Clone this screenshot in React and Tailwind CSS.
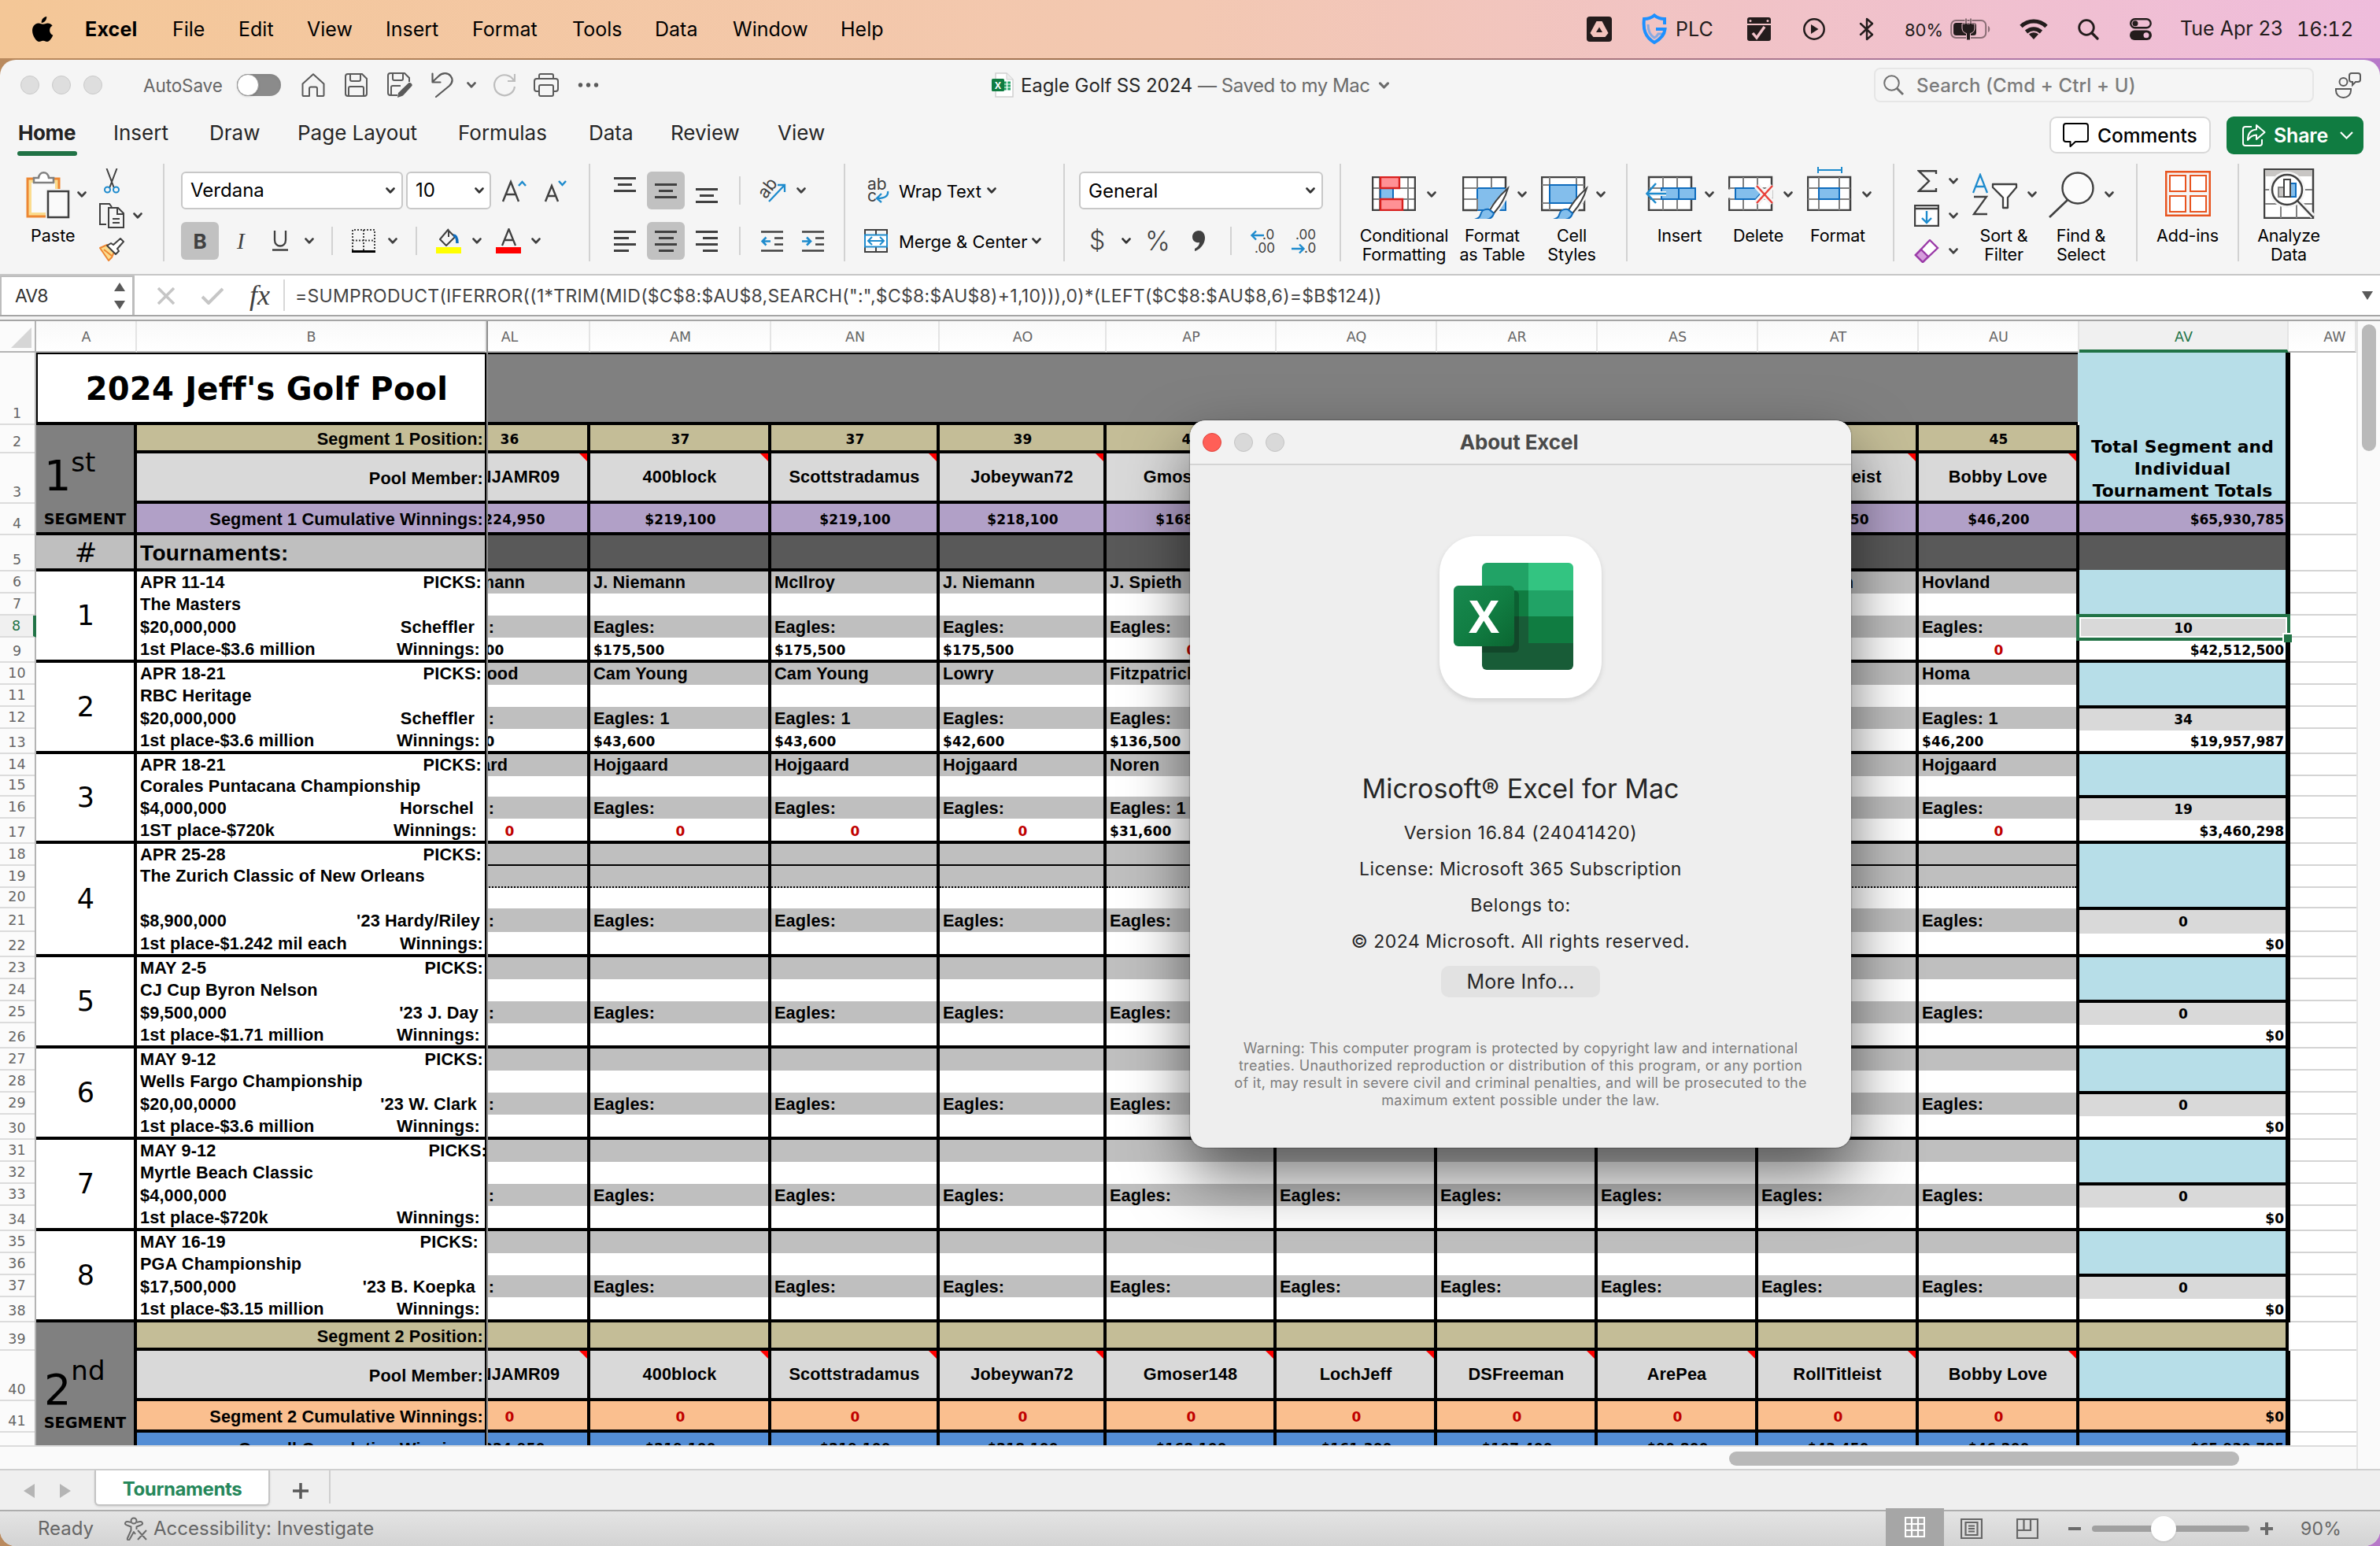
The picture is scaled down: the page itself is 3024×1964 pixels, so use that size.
import clsx from "clsx";

const ui = "font-[Inter,'Liberation_Sans',sans-serif]";
const arial = "font-['Liberation_Sans',sans-serif] font-bold text-[21.700px] tracking-[0.150px]";
const verdana = "font-['DejaVu_Sans',sans-serif] font-bold text-[17px]";

/* ---------- small pieces ---------- */

function Chevron({ className = "text-[#333]" }) {
  return (
    <svg className={clsx("h-2 w-3 shrink-0", className)} viewBox="0 0 12 8" fill="none" stroke="currentColor" strokeWidth="2.8" strokeLinecap="round" strokeLinejoin="round">
      <path d="M1.6 1.6 6 6.2l4.4-4.6" />
    </svg>
  );
}

function Icon({ className, box, children }) {
  return (
    <svg className={clsx("shrink-0", className)} viewBox={box} fill="none" stroke="currentColor" strokeWidth="2">
      {children}
    </svg>
  );
}

function Sep({ className = "" }) {
  return <div className={clsx("h-9 w-0.5 shrink-0 bg-[#d2d2d2]", className)} />;
}

/* ---------- mac menu bar ---------- */

const menus = [
  { name: "File", w: "w-[84px]" },
  { name: "Edit", w: "w-[87px]" },
  { name: "View", w: "w-[100px]" },
  { name: "Insert", w: "w-[110px]" },
  { name: "Format", w: "w-[127px]" },
  { name: "Tools", w: "w-[105px]" },
  { name: "Data", w: "w-[99px]" },
  { name: "Window", w: "w-[137px]" },
  { name: "Help", w: "w-[80px]" },
];

function MenuBar() {
  return (
    <div className="flex h-[74px] w-full items-center bg-linear-to-r from-[#f4c797] via-[#f3c8b2] to-[#efbcdc] text-[25px] text-black">
      <svg className="ml-[41px] h-8 w-[27px] shrink-0" viewBox="0 0 27 32" fill="#000">
        <path d="M18.2 0c.3 2.200-.5 4.200-1.700 5.600-1.200 1.400-3 2.400-4.800 2.300-.3-2.100.7-4.200 1.800-5.500C14.800 1 16.700.1 18.200 0z" />
        <path d="M26.300 23.700c-.7 1.700-1.100 2.400-2 3.900-1.300 2-3.100 4.400-5.300 4.400-2 0-2.500-1.300-5.200-1.300-2.700 0-3.300 1.300-5.300 1.300-2.200 0-3.900-2.200-5.200-4.200C-.4 22.400-.8 15.900 1.500 12.300c1.500-2.400 4-3.900 6.400-3.900 2.400 0 3.900 1.300 5.900 1.300 1.900 0 3.100-1.300 5.900-1.300 2.100 0 4.300 1.100 5.900 3.100-5.100 2.900-4.300 10.200.7 12.200z" />
      </svg>
      <div className="ml-10 w-[111px] pt-0.5 font-bold tracking-[0.2px]">Excel</div>
      {menus.map((m) => (
        <div key={m.name} className={clsx("shrink-0 pt-0.5", m.w)}>{m.name}</div>
      ))}
      <svg className="ml-[868px] h-8 w-8 shrink-0" viewBox="0 0 32 32">
        <rect width="32" height="32" rx="4" fill="#231c1c" />
        <path d="M12.500 6h7l8 15-4 5h-15l-4-5z" fill="#f2c4bd" />
        <path d="M16 13.500l4 6.500h-8z" fill="#231c1c" />
      </svg>
      <Icon className="ml-[37px] h-10 w-[34px] text-[#1e90ff]" box="0 0 34 40">
        <path strokeWidth="4" d="M30 14V7c-5 0-9-1-13-4.500C13 6 9 7 4 7c-1.500 13 1 23 13 30 9-5 13-11 13.500-17H19" />
        <path strokeWidth="3" d="M30 26h-8c-1 2-3 4-5 5-5-3-8-8-8-17" strokeOpacity=".5" />
      </Icon>
      <div className="ml-2.5 w-[91px] pt-0.5 text-[#231c1c]">PLC</div>
      <svg className="h-[30px] w-[30px] shrink-0" viewBox="0 0 30 30">
        <path d="M0 8V3a3 3 0 0 1 3-3h24a3 3 0 0 1 3 3v5zM0 10h30v17a3 3 0 0 1-3 3H3a3 3 0 0 1-3-3z" fill="#231c1c" />
        <circle cx="4" cy="4.500" r="1.500" fill="#f0c2c9" />
        <circle cx="26" cy="4.500" r="1.500" fill="#f0c2c9" />
        <path d="M7 20l5 6L22 12" fill="none" stroke="#f0c2c9" strokeWidth="3.500" />
      </svg>
      <Icon className="ml-10 h-[30px] w-[30px] text-[#231c1c]" box="0 0 30 30">
        <circle cx="15" cy="15" r="12.700" strokeWidth="2.500" />
        <path d="M11 9l9.500 6-9.500 6z" fill="currentColor" stroke="none" />
      </Icon>
      <Icon className="ml-[42px] h-[30px] w-[20px] text-[#231c1c]" box="0 0 20 30">
        <path strokeWidth="2.400" d="M2 8l15 14-7 6V2l7 6L2 22" strokeLinejoin="round" strokeLinecap="round" />
      </Icon>
      <div className="ml-[38px] w-[58px] pt-0.5 text-[22px] text-[#231c1c]">80%</div>
      <svg className="h-[28px] w-[52px] shrink-0" viewBox="0 0 52 28">
        <rect x="1.200" y="3" width="44" height="22" rx="6" fill="none" stroke="#231c1c" strokeOpacity=".5" strokeWidth="2" />
        <path d="M48 10c3 1 3 7 0 8z" fill="#231c1c" fillOpacity=".5" />
        <rect x="4" y="6" width="29" height="16" rx="3.500" fill="#231c1c" />
        <path d="M19 0v7h-4v6c0 4 3 6 5.500 6.500V28h5v-8.500C28 19 31 17 31 13V7h-4V0h-2v7h-4V0z" fill="#231c1c" stroke="#efc0cd" strokeWidth="1" />
      </svg>
      <Icon className="ml-[36px] h-[26px] w-[36px] text-[#231c1c]" box="0 0 36 26">
        <path strokeWidth="5" d="M2 9.500C11 .8 25 .8 34 9.500M8.500 16.500c6-5 13-5 19 0" />
        <path d="M12 19.500c4-3 8-3 12 0l-6 6.500z" fill="currentColor" stroke="none" />
      </Icon>
      <Icon className="ml-[38px] h-[27px] w-[27px] text-[#231c1c]" box="0 0 27 27">
        <circle cx="11" cy="11" r="9.300" strokeWidth="2.800" />
        <path strokeWidth="3.200" strokeLinecap="round" d="M18 18l7 7" />
      </Icon>
      <Icon className="ml-[39px] h-[28px] w-[28px] text-[#231c1c]" box="0 0 28 28">
        <rect x="1.200" y="1.200" width="25.500" height="11" rx="5.500" strokeWidth="2.400" />
        <circle cx="7" cy="6.700" r="3.500" fill="currentColor" stroke="none" />
        <rect y="15.500" width="28" height="12.500" rx="6.200" fill="currentColor" stroke="none" />
        <circle cx="21" cy="21.700" r="3.500" fill="#efbdd7" stroke="none" />
      </Icon>
      <div className="ml-9 w-[148px] whitespace-nowrap text-[#231c1c]">Tue Apr 23</div>
      <div className="text-[25.500px] tracking-[-0.2px] whitespace-nowrap text-[#231c1c] tabular-nums">16:12</div>
    </div>
  );
}

/* ---------- title bar ---------- */

function TitleBar() {
  return (
    <div className="flex h-16 items-center text-[#5a5a5a]">
      <div className="ml-[26px] flex w-[156px] gap-4">
        <div className="h-6 w-6 rounded-full border border-[#c9c9c9] bg-[#dedede]" />
        <div className="h-6 w-6 rounded-full border border-[#c9c9c9] bg-[#dedede]" />
        <div className="h-6 w-6 rounded-full border border-[#c9c9c9] bg-[#dedede]" />
      </div>
      <div className="w-[119px] pt-0.5 text-[22.500px] tracking-[-0.1px] text-[#666]">AutoSave</div>
      <div className="h-7 w-14 rounded-full bg-[#8b8b8b] shadow-inner">
        <div className="h-7 w-7 rounded-full border border-[#999] bg-white shadow" />
      </div>
      <Icon className="ml-[26px] h-[30px] w-[30px]" box="0 0 30 30">
        <path strokeLinejoin="round" d="M1.500 13.500 15 1.200l13.500 12.300V28a1 1 0 0 1-1 1H20v-9.500a2 2 0 0 0-2-2h-6a2 2 0 0 0-2 2V29H2.500a1 1 0 0 1-1-1z" />
      </Icon>
      <Icon className="ml-[25px] h-[30px] w-[29px]" box="0 0 29 30">
        <path d="M1 4a3 3 0 0 1 3-3h18l6 6v19a3 3 0 0 1-3 3H4a3 3 0 0 1-3-3zM7 1v7a2 2 0 0 0 2 2h9a2 2 0 0 0 2-2V1M5 29V19a2 2 0 0 1 2-2h15a2 2 0 0 1 2 2v10" />
      </Icon>
      <Icon className="ml-[25px] h-8 w-8" box="0 0 32 32">
        <path d="M13 29H4a3 3 0 0 1-3-3V4a3 3 0 0 1 3-3h18l6 6v5M7 1v7a2 2 0 0 0 2 2h9a2 2 0 0 0 2-2V1M5 29V19a2 2 0 0 1 2-2h10" />
        <path fill="currentColor" stroke="none" d="M27 13.500c2-1.500 5.500 1 4.500 3.500L20 29.500 13 32l1-6z" />
      </Icon>
      <Icon className="ml-[24px] h-8 w-7" box="0 0 28 32">
        <path strokeLinecap="round" strokeLinejoin="round" strokeWidth="2.200" d="M1.500 1.500v11h10M1.500 12 9 5c5-5 12-5 15.500-.5 3.500 4.500 2 9-1.500 12.500L6 31" />
      </Icon>
      <Chevron className="ml-[17px]" />
      <Icon className="ml-[22px] h-[30px] w-[28px] text-[#bdbdbd]" box="0 0 28 30">
        <path strokeWidth="2.200" d="M27 1v9h-9M26 10A13 13 0 1 0 27 17" />
      </Icon>
      <Icon className="ml-[23px] h-[30px] w-8" box="0 0 32 30">
        <path d="M7 7V3a2 2 0 0 1 2-2h14a2 2 0 0 1 2 2v4M7 23H4a3 3 0 0 1-3-3V10a3 3 0 0 1 3-3h24a3 3 0 0 1 3 3v10a3 3 0 0 1-3 3h-3M7 17a2 2 0 0 1 2-2h14a2 2 0 0 1 2 2v10a2 2 0 0 1-2 2H9a2 2 0 0 1-2-2z" />
      </Icon>
      <svg className="ml-6 h-2 w-7 shrink-0" viewBox="0 0 28 8" fill="#5a5a5a">
        <circle cx="3.500" cy="4" r="2.700" />
        <circle cx="13.500" cy="4" r="2.700" />
        <circle cx="23.500" cy="4" r="2.700" />
      </svg>
      <svg className="ml-[498px] h-8 w-7 shrink-0" viewBox="0 0 28 32">
        <path d="M5 1h14l8 8v22H5z" fill="#fff" stroke="#cfcfcf" strokeWidth="1.500" />
        <path d="M19 1v8h8" fill="#eee" stroke="#cfcfcf" />
        <path d="M15 13h9M15 17h9M15 21h9" stroke="#21a366" strokeWidth="3" />
        <path d="M19.500 10v14" stroke="#fff" strokeWidth="1.500" />
        <rect y="8" width="16" height="16" rx="1.500" fill="#107c41" />
        <text x="8" y="20.500" textAnchor="middle" fontSize="12" fontWeight="700" fontFamily="Open Sans" fill="#fff">X</text>
      </svg>
      <div className="ml-[9px] w-[225px] pt-0.5 text-[24px] tracking-[-0.1px] whitespace-nowrap text-[#262626]">Eagle Golf SS 2024</div>
      <div className="w-[229px] pt-0.5 text-[24px] tracking-[-0.45px] whitespace-nowrap text-[#6b6b6b]">— Saved to my Mac</div>
      <Chevron className="h-[9px] w-[15px] text-[#6b6b6b]" />
      <div className="ml-[615px] flex h-11 w-[559px] items-center rounded-lg border-2 border-[#e6e6e6]">
        <Icon className="ml-2.5 h-[26px] w-[26px] text-[#707070]" box="0 0 26 26">
          <circle cx="10.500" cy="10.500" r="9.300" />
          <path strokeWidth="2.800" d="M17 17l8 8" />
        </Icon>
        <div className="ml-4 pt-0.5 text-[24px] font-medium tracking-[0.15px] whitespace-nowrap text-[#7b7b7b]">Search (Cmd + Ctrl + U)</div>
      </div>
      <Icon className="ml-[27px] h-[33px] w-[34px]" box="0 0 34 33">
        <circle cx="10.500" cy="12" r="5" />
        <path d="M1 21h19v2c0 5-4 9-9.500 9S1 28 1 23zM18 4a3 3 0 0 1 3-3h8a3 3 0 0 1 3 3v5a3 3 0 0 1-3 3h-3l-4 4v-4h-1a3 3 0 0 1-3-3z" />
      </Icon>
    </div>
  );
}

/* ---------- ribbon ---------- */

const tabs = [
  { name: "Insert", w: "w-[122px]" },
  { name: "Draw", w: "w-[112px]" },
  { name: "Page Layout", w: "w-[204px]" },
  { name: "Formulas", w: "w-[166px]" },
  { name: "Data", w: "w-[104px]" },
  { name: "Review", w: "w-[136px]" },
  { name: "View", w: "w-[80px]" },
];

function TabRow() {
  return (
    <div className="flex h-[68px] items-start">
      <div className="ml-[22px] w-[122px] pt-2.5">
        <div className="pl-px text-[26px] leading-[38px] font-bold tracking-[-0.4px] text-[#222]">Home</div>
        <div className="mt-1 h-1.5 w-[76px] rounded-full bg-[#217346]" />
      </div>
      {tabs.map((t) => (
        <div key={t.name} className={clsx("shrink-0 pt-2.5 text-[26px] leading-[38px] whitespace-nowrap text-[#262626]", t.w)}>{t.name}</div>
      ))}
      <div className="mt-2 ml-[1536px] flex h-[47px] w-[205px] shrink-0 items-center rounded-[9px] border-2 border-[#d8d8d8] bg-white">
        <Icon className="ml-[15px] h-[31px] w-[33px] text-black" box="0 0 33 31">
          <path strokeLinejoin="round" d="M1 4a3 3 0 0 1 3-3h25a3 3 0 0 1 3 3v17a3 3 0 0 1-3 3H16l-6.500 6v-6H4a3 3 0 0 1-3-3z" />
        </Icon>
        <div className="ml-[11px] pt-0.5 text-[24.500px] font-medium text-black">Comments</div>
      </div>
      <div className="mt-2 ml-5 flex h-12 w-[174px] shrink-0 items-center rounded-[9px] bg-[#107c41] text-white">
        <Icon className="ml-5 h-7 w-[30px]" box="0 0 30 28">
          <path strokeLinejoin="round" d="M12 3H4a3 3 0 0 0-3 3v18a3 3 0 0 0 3 3h18a3 3 0 0 0 3-3v-5M18 6.500V1l10.500 9L18 19v-5.500c-5 0-8 2-11 6.500 0-7.500 3.500-13 11-13.500z" />
        </Icon>
        <div className="ml-[10px] w-[84px] pt-0.5 text-[25px] font-semibold tracking-[-0.2px]">Share</div>
        <Icon className="h-[10px] w-[17px]" box="0 0 17 10">
          <path strokeWidth="2.200" d="M1 1l7.500 7.500L16 1" />
        </Icon>
      </div>
    </div>
  );
}

function Group({ className, children }) {
  return <div className={clsx("h-[124px] shrink-0 border-r-2 border-[#d2d2d2]", className)}>{children}</div>;
}

function Lines({ widths, align, className = "" }) {
  return (
    <div className={clsx("flex shrink-0 flex-col gap-[5px]", align, className)}>
      {widths.map((w, i) => (
        <div key={i} className={clsx("h-[3px] bg-[#404040]", w)} />
      ))}
    </div>
  );
}

function BigLabel({ className, lines }) {
  return (
    <div className={clsx("shrink-0 text-center text-[21.500px] leading-6 tracking-[-0.2px] whitespace-nowrap text-black", className)}>
      {lines.map((l) => (
        <div key={l}>{l}</div>
      ))}
    </div>
  );
}

function Brush() {
  return (
    <g>
      <path d="M59 16 35 44l5 5 19-29z" fill="#f5f5f5" stroke="#f5f5f5" strokeWidth="6" />
      <path d="M58 15C50 22 40 34 35 43l5 4c7-8 15-21 18-32z" fill="#fff" stroke="#404040" />
      <path d="M34 42c-6-1-10 2-11 7-.5 2.500-2 4-5 5 7 3 20 2 22-7z" fill="#83beec" stroke="#0f6cbd" />
    </g>
  );
}

function Ribbon() {
  return (
    <div className="flex h-[142px] items-start border-b-2 border-[#c6c6c6] text-[#404040]">
      {/* clipboard */}
      <Group className="flex w-[209px]">
        <div className="ml-[33px] w-[65px] pt-2.5">
          <Icon className="h-[60px] w-[56px]" box="0 0 56 60">
            <path d="M2 9h40v48H2z" fill="#fbdc8e" stroke="#ed8733" strokeWidth="3" />
            <path d="M7 14h30v38H7z" fill="#fafafa" stroke="none" />
            <path d="M10 14V8h6c1-9 12-9 13 0h6v6z" fill="#fff" stroke="#808080" strokeWidth="2.500" />
            <path d="M28 25h26v34H28z" fill="#fafafa" stroke="#f5f5f5" strokeWidth="6" />
            <path d="M28 25h26v33H28z" fill="#fafafa" strokeWidth="2.500" />
          </Icon>
          <div className="mt-[9px] ml-[6px] text-[21.500px] leading-6 text-black">Paste</div>
        </div>
        <Chevron className="mt-[35px]" />
        <div className="ml-4 flex flex-col pt-1.5">
          <Icon className="ml-1.5 h-[32px] w-[20px]" box="0 0 20 32">
            <path d="M3.500 0l9.500 25M16.500 0 7 25" />
            <circle cx="4.500" cy="27" r="3.500" stroke="#1e8bcd" />
            <circle cx="15.500" cy="27" r="3.500" stroke="#1e8bcd" />
          </Icon>
          <div className="mt-3 flex items-center">
            <Icon className="h-8 w-8" box="0 0 32 32">
              <path d="M9 27H1V1h12l3 4M12 6h12l7 7v18H12zM23 6v8h8M17 20h9M17 25h9" />
            </Icon>
            <Chevron className="ml-[11px]" />
          </div>
          <Icon className="mt-3 h-[30px] w-8" box="0 0 32 30">
            <path d="M1 13 10 9l9 9-3 7-4 4z" fill="#fbdc8e" stroke="#ed8733" strokeLinejoin="round" />
            <path d="M6 15l10 8" stroke="#ed8733" />
            <path d="M10 10l5-3 3 2 9-8 4 4-8 9 2 3-4 4z" fill="#fff" strokeLinejoin="round" />
          </Icon>
        </div>
      </Group>

      {/* font */}
      <Group className="w-[541px]">
        <div className="mt-2.5 ml-[21px] flex h-12 items-center">
          <div className="flex h-12 w-[282px] items-center rounded-md border-2 border-[#c8c8c8] bg-white text-[24px] text-black">
            <div className="ml-[10px] w-[248px]">Verdana</div>
            <Chevron />
          </div>
          <div className="ml-1 flex h-12 w-[108px] items-center rounded-md border-2 border-[#c8c8c8] bg-white text-[24px] text-black">
            <div className="ml-2.5 w-[75px]">10</div>
            <Chevron />
          </div>
          <Icon className="ml-[13px] h-[30px] w-[32px]" box="0 0 32 30">
            <path d="M2 29 12 4l10 25M5.500 20h13" strokeWidth="2.500" />
            <path d="M22 9l4.500-5L31 9" stroke="#1e8bcd" strokeWidth="2.500" />
          </Icon>
          <Icon className="ml-[22px] h-[30px] w-[30px]" box="0 0 30 30">
            <path d="M2 29l8-20 8 20M5 22h10" strokeWidth="2.500" />
            <path d="M19 3l4.500 5L28 3" stroke="#1e8bcd" strokeWidth="2.500" />
          </Icon>
        </div>
        <div className="mt-4 ml-[21px] flex h-12 items-center">
          <div className="flex h-12 w-12 items-center justify-center rounded-md bg-[#c1c1c1] text-[26px] font-bold text-[#404040]">B</div>
          <div className="ml-[23px] w-[45px] font-['Liberation_Serif',serif] text-[29px] leading-8 italic">I</div>
          <Icon className="h-[28px] w-[20px]" box="0 0 20 28">
            <path strokeWidth="2.300" d="M3 1v12c0 10 14 10 14 0V1" />
            <path strokeWidth="2.500" d="M0 25.500h20" />
          </Icon>
          <Chevron className="ml-[21px]" />
          <Sep className="ml-[22px]" />
          <Icon className="ml-6 h-[30px] w-[30px]" box="0 0 30 30">
            <path strokeDasharray="2 2" d="M1 27V1h28v26M15 1v26M1 14.500h28" />
            <path stroke="#000" strokeWidth="3" d="M0 28.500h30" />
          </Icon>
          <Chevron className="ml-[16px]" />
          <Sep className="ml-[23px]" />
          <Icon className="ml-6 h-[32px] w-[32px]" box="0 0 32 32">
            <path d="M16 1 5 14l8 8 11-11L16 3v8" strokeLinejoin="round" />
            <path d="M22 9c4 0 5 4 5 10" stroke="#0f6cbd" strokeWidth="3.500" />
            <path d="M0 24h32v8H0z" fill="#ff0" stroke="none" />
          </Icon>
          <Chevron className="ml-[14px]" />
          <Icon className="ml-[18px] h-[32px] w-[32px]" box="0 0 32 32">
            <path d="M8 22l8.500-21L25 22M11 15h11" strokeWidth="2.300" />
            <path d="M0 24h32v8H0z" fill="#f00" stroke="none" />
          </Icon>
          <Chevron className="ml-[13px]" />
        </div>
      </Group>

      {/* alignment */}
      <Group className="w-[324px]">
        <div className="mt-2.5 ml-[30px] flex h-12 items-center">
          <Lines className="-mt-4" align="items-center" widths={["w-7", "w-[18px]", "w-7"]} />
          <div className="ml-3.5 flex h-12 w-12 items-center justify-center rounded-md bg-[#c1c1c1]">
            <Lines align="items-center" widths={["w-7", "w-[18px]", "w-7"]} />
          </div>
          <Lines className="mt-3 ml-3.5" align="items-center" widths={["w-7", "w-[18px]", "w-7"]} />
          <Sep className="ml-[27px]" />
          <Icon className="ml-6 h-[32px] w-[34px]" box="0 0 34 32">
            <text x="1" y="23" fontSize="22" fontFamily="Inter" fill="#404040" stroke="none" transform="rotate(-52 9 18)">ab</text>
            <path d="M12 30 32 9M23 9h9v9" stroke="#1e8bcd" strokeWidth="2.300" />
          </Icon>
          <Chevron className="ml-[13px]" />
        </div>
        <div className="mt-4 ml-[30px] flex h-12 items-center">
          <Lines align="items-start" widths={["w-7", "w-[19px]", "w-7", "w-[19px]"]} />
          <div className="ml-3.5 flex h-12 w-12 items-center justify-center rounded-md bg-[#c1c1c1]">
            <Lines align="items-center" widths={["w-7", "w-[19px]", "w-7", "w-[19px]"]} />
          </div>
          <Lines className="ml-3.5" align="items-end" widths={["w-7", "w-[19px]", "w-7", "w-[19px]"]} />
          <Sep className="ml-[27px]" />
          <Icon className="ml-[26px] h-[27px] w-[28px]" box="0 0 28 27">
            <path strokeWidth="2.600" d="M0 1.500h28M17 9.500h11M17 17.500h11M0 25.500h28" />
            <path stroke="#1e8bcd" strokeWidth="2.600" d="M12 13.500H2M6.500 8.500l-5 5 5 5" />
          </Icon>
          <Icon className="ml-[24px] h-[27px] w-[28px]" box="0 0 28 27">
            <path strokeWidth="2.600" d="M0 1.500h28M17 9.500h11M17 17.500h11M0 25.500h28" />
            <path stroke="#1e8bcd" strokeWidth="2.600" d="M0 13.500h10M6 8.500l5 5-5 5" />
          </Icon>
        </div>
      </Group>

      {/* wrap and merge */}
      <Group className="w-[279px]">
        <div className="mt-2.5 ml-7 flex h-12 items-center">
          <Icon className="h-[32px] w-[28px]" box="0 0 28 32">
            <text x="0" y="15" fontSize="21" fontFamily="Inter" fill="#404040" stroke="none">ab</text>
            <text x="0" y="30" fontSize="21" fontFamily="Inter" fill="#404040" stroke="none">c</text>
            <path d="M26 17c1 6-4 9-13 9M18 20l-6 6 6 5" stroke="#1e8bcd" strokeWidth="2.300" />
          </Icon>
          <div className="ml-3 w-[112px] pt-0.5 text-[22px] tracking-[-0.1px] whitespace-nowrap text-black">Wrap Text</div>
          <Chevron />
        </div>
        <div className="mt-4 ml-6 flex h-12 items-center">
          <Icon className="h-[30px] w-[30px]" box="0 0 30 30">
            <path d="M1 1h28v28H1zM15 1v6M15 23v6" />
            <path d="M1 7.500h28v15H1z" fill="#fff" stroke="#1e8bcd" />
            <path d="M5 15h20M10 10l-5 5 5 5M20 10l5 5-5 5" stroke="#1e8bcd" />
          </Icon>
          <div className="ml-[14px] w-[169px] pt-0.5 text-[22px] whitespace-nowrap text-black">Merge &amp; Center</div>
          <Chevron />
        </div>
      </Group>

      {/* number */}
      <Group className="w-[351px]">
        <div className="mt-2.5 ml-[18px] flex h-12 w-[310px] items-center rounded-md border-2 border-[#c8c8c8] bg-white text-[24px] text-black">
          <div className="ml-2.5 w-[276px] pt-0.5">General</div>
          <Chevron />
        </div>
        <div className="mt-4 ml-[31px] flex h-12 items-center">
          <div className="w-[41px] text-[32px] leading-8 font-light">$</div>
          <Chevron />
          <div className="ml-[18px] w-[60px] text-[34px] leading-8 font-light">%</div>
          <svg className="h-[26px] w-4 shrink-0" viewBox="0 0 16 26" fill="#404040">
            <path d="M8 0c5 0 8 4 8 9 0 8-6 15-13 17v-3c4-2 6-5 6-8C3 16 0 12 0 8c0-4 3-8 8-8z" />
          </svg>
          <Sep className="ml-[32px]" />
          <svg className="ml-[23px] h-[34px] w-[34px] shrink-0" viewBox="0 0 34 34">
            <text x="16" y="15" fontSize="17" fontFamily="Inter" fill="#404040">.0</text>
            <text x="6" y="32" fontSize="17" fontFamily="Inter" fill="#404040">.00</text>
            <path d="M18 10H3M8 4.500 2.500 10 8 15.500" fill="none" stroke="#1e8bcd" strokeWidth="2.400" />
          </svg>
          <svg className="ml-[19px] h-[34px] w-[34px] shrink-0" viewBox="0 0 34 34">
            <text x="5" y="15" fontSize="17" fontFamily="Inter" fill="#404040">.00</text>
            <text x="16" y="32" fontSize="17" fontFamily="Inter" fill="#404040">.0</text>
            <path d="M0 27h15M10 21.500l5.500 5.500-5.500 5.500" fill="none" stroke="#1e8bcd" strokeWidth="2.400" />
          </svg>
        </div>
      </Group>

      {/* styles */}
      <Group className="w-[364px]">
        <div className="ml-[39px] flex h-[79px] items-start pt-4">
          <Icon className="h-[44px] w-[56px]" box="0 0 56 44">
            <path fill="#fff" d="M1 1h54v42H1z" />
            <path stroke="#808080" d="M10 1v42M46 1v42M1 15h54M1 29h54" />
            <path fill="#fff" d="M1 1h54v42H1z" fillOpacity="0" strokeWidth="2.500" />
            <path fill="#83beec" stroke="#0f6cbd" d="M11 15h16v14H11z" />
            <path fill="#ff9195" stroke="#d8201e" strokeWidth="2.400" d="M11 1h24v14H11zM11 29h28v14H11z" />
          </Icon>
          <Chevron className="mt-[19px] ml-[14px]" />
          <Icon className="ml-[33px] h-[54px] w-[60px]" box="0 0 60 54">
            <path fill="#fff" d="M1 1h54v42H1z" stroke="none" />
            <path fill="#83beec" stroke="#0f6cbd" d="M19 15h36v28H19z" />
            <path stroke="#808080" d="M19 1v14M37 1v14M1 15h18M1 29h18M19 29v14" />
            <path strokeWidth="2.500" d="M55 15V1H1v42h18" />
            <Brush />
          </Icon>
          <Chevron className="mt-[19px] ml-[10px]" />
          <Icon className="ml-[18px] h-[54px] w-[60px]" box="0 0 60 54">
            <path fill="#fff" strokeWidth="2.500" d="M1 1h54v42H1z" />
            <path stroke="#808080" d="M11 1v42M45 1v42M1 11h54M1 34h54" />
            <path fill="#83beec" stroke="#0f6cbd" d="M11 11h34v23H11z" />
            <Brush />
          </Icon>
          <Chevron className="mt-[19px] ml-[10px]" />
        </div>
        <div className="ml-[19px] flex">
          <BigLabel className="w-[122px]" lines={["Conditional", "Formatting"]} />
          <BigLabel className="ml-1 w-[94px]" lines={["Format", "as Table"]} />
          <BigLabel className="ml-[14px] w-[80px]" lines={["Cell", "Styles"]} />
        </div>
      </Group>

      {/* cells */}
      <Group className="w-[339px]">
        <div className="ml-[23px] flex h-[79px] items-start pt-1">
          <Icon className="h-[56px] w-[64px]" box="0 0 64 56">
            <path fill="#fff" strokeWidth="2.500" d="M4 13h54v42H4z" />
            <path stroke="#808080" d="M22 13v42M40 13v42M4 27h54M4 41h54" />
            <path fill="#83beec" stroke="#0f6cbd" d="M20 27h43v14H20zM42 27v14" />
            <path stroke="#f5f5f5" strokeWidth="6" d="M26 34H2" />
            <path stroke="#1e8bcd" strokeWidth="2.500" d="M26 34H2M13 21 1.500 34 13 46" />
          </Icon>
          <Chevron className="mt-[31px] ml-[11px]" />
          <Icon className="ml-[18px] h-[56px] w-[60px]" box="0 0 60 56">
            <path fill="#fff" strokeWidth="2.500" d="M1 13h54v42H1z" />
            <path stroke="#808080" d="M19 13v42M37 13v42M1 27h54M1 41h54" />
            <path fill="#f5f5f5" stroke="none" d="M0 28.500h56v11H0z" />
            <path fill="#83beec" stroke="#0f6cbd" d="M9 27h26l6 7-6 7H9z" />
            <path stroke="#f5f5f5" strokeWidth="8" d="M36 24l20 22M56 24 36 46" />
            <path stroke="#e8403a" strokeWidth="2.400" d="M36 24l20 22M56 24 36 46" />
          </Icon>
          <Chevron className="mt-[31px] ml-[10px]" />
          <Icon className="ml-[18px] h-[56px] w-[58px]" box="0 0 58 56">
            <path stroke="#1e8bcd" d="M14 4h30M14 0v8M44 0v8" />
            <path fill="#fff" strokeWidth="2.500" d="M1 13h54v42H1z" />
            <path stroke="#808080" d="M15 13v42M41 13v42M1 27h54M1 41h54" />
            <path fill="#83beec" stroke="#0f6cbd" d="M15 27h26v14H15z" />
          </Icon>
          <Chevron className="mt-[31px] ml-[12px]" />
        </div>
        <div className="ml-5 flex">
          <BigLabel className="w-[92px]" lines={["Insert"]} />
          <BigLabel className="ml-[8px] w-[92px]" lines={["Delete"]} />
          <BigLabel className="ml-[9px] w-[92px]" lines={["Format"]} />
        </div>
      </Group>

      {/* editing */}
      <Group className="flex w-[309px]">
        <div className="ml-[25px] w-[76px] shrink-0">
          <div className="mt-2 flex h-7 items-center">
            <Icon className="ml-1 h-7 w-[26px]" box="0 0 26 28">
              <path strokeWidth="2.400" d="M24 5V1.200H2L15 14 2 26.800h22V23" />
            </Icon>
            <Chevron className="ml-[14px]" />
          </div>
          <div className="mt-4 flex h-7 items-center">
            <Icon className="h-7 w-8" box="0 0 32 28">
              <path fill="#fff" d="M1 1h30v26H1zM1 5h30" strokeWidth="2.400" />
              <path stroke="#1e8bcd" strokeWidth="2.400" d="M16 8v14M10 17l6 6 6-6" />
            </Icon>
            <Chevron className="ml-[12px]" />
          </div>
          <div className="mt-[15px] flex h-8 items-center">
            <Icon className="h-[30px] w-8" box="0 0 32 30">
              <path fill="#fff" stroke="#9b3ba8" strokeWidth="2.400" d="M20 1l10 10-19 18L2 20z" />
              <path fill="#d59ddc" stroke="#9b3ba8" strokeWidth="2.400" d="M9 13l9 9-7 7-9-9z" />
            </Icon>
            <Chevron className="ml-[12px]" />
          </div>
        </div>
        <div className="w-[98px] shrink-0">
          <div className="flex h-[79px] items-start pt-3">
            <Icon className="ml-[-2px] h-[54px] w-[58px]" box="0 0 58 54">
              <path stroke="#1e8bcd" strokeWidth="2.300" d="M1 25 10 2l9 23M4 17h12" />
              <path strokeWidth="2.300" d="M2 30h16L2 52h17" />
              <path fill="#fff" strokeWidth="2.300" strokeLinejoin="round" d="M26 14h30v4L45 31v13h-6V31L26 18z" />
            </Icon>
            <Chevron className="mt-[23px] ml-[12px]" />
          </div>
          <BigLabel className="w-[76px]" lines={["Sort &", "Filter"]} />
        </div>
        <div className="w-[90px] shrink-0">
          <div className="flex h-[79px] items-start pt-2.5">
            <Icon className="ml-[-4px] h-[60px] w-[60px]" box="0 0 60 60">
              <circle cx="38" cy="21" r="19.500" strokeWidth="2.400" fill="#fbfbfb" />
              <path strokeWidth="2.600" d="M25 36 2 58" />
            </Icon>
            <Chevron className="mt-[25px] ml-[12px]" />
          </div>
          <BigLabel className="w-[76px]" lines={["Find &", "Select"]} />
        </div>
      </Group>

      <Group className="w-[129px]">
        <div className="flex h-[79px] justify-center pt-[9px]">
          <Icon className="h-[58px] w-[58px] text-[#e8541f]" box="0 0 58 58">
            <path strokeWidth="2.500" d="M1.200 1.200h55.600v55.600H1.200z" />
            <path fill="#fff" d="M6 6h20v20H6zM32 6h20v20H32zM6 32h20v20H6zM32 32h20v20H32z" />
          </Icon>
        </div>
        <BigLabel lines={["Add-ins"]} />
      </Group>

      <div className="w-[126px]">
        <div className="flex h-[79px] justify-center pt-1.5">
          <Icon className="h-[64px] w-[65px]" box="0 0 65 64">
            <path fill="#fff" strokeWidth="2.500" d="M1 1h62v62H1z" />
            <path fill="#c8c6c4" stroke="none" d="M2 2h60v8H2z" />
            <path stroke="#808080" d="M2 27h60M2 45h60M22 45v18M42 45v18" />
            <circle cx="30" cy="27" r="22" fill="#f5f5f5" stroke="#f5f5f5" />
            <path stroke="#f5f5f5" strokeWidth="7" d="M43 41l20 20" />
            <circle cx="30" cy="27" r="19" fill="#fff" strokeWidth="2.500" />
            <path strokeWidth="2.500" d="M43 41l20 21" />
            <path fill="#c8c6c4" stroke="#808080" d="M19 24h7v12h-7z" />
            <path fill="#83beec" stroke="#0f6cbd" d="M33 19h8v17h-8z" />
            <path fill="#fff" d="M26 14h8v22h-8z" />
          </Icon>
        </div>
        <BigLabel lines={["Analyze", "Data"]} />
      </div>
    </div>
  );
}

/* ---------- formula bar ---------- */

function FormulaBar() {
  return (
    <div className="flex h-[58px] flex-col bg-[#f0f0f0]">
      <div className="flex h-[52px] items-center border-b-2 border-[#a5a5a5] bg-white">
        <div className="flex h-[50px] w-[171px] items-center border-t-2 border-r-3 border-l-2 border-[#bdbdbd] text-[23px] text-[#333]">
          <div className="ml-[17px] w-[125px] tracking-[-1px]">AV8</div>
          <svg className="h-[36px] w-4" viewBox="0 0 16 36" fill="#595959">
            <path d="M8 1l7 11H1zM8 35l7-11H1z" />
          </svg>
        </div>
        <Icon className="mt-0.5 ml-[29px] h-[22px] w-[22px] text-[#c6c6c6]" box="0 0 22 22">
          <path strokeWidth="3.500" d="M1 1l20 20M21 1 1 21" />
        </Icon>
        <Icon className="mt-0.5 ml-[34px] h-[22px] w-[28px] text-[#c6c6c6]" box="0 0 28 22">
          <path strokeWidth="4" d="M1 12l8 8L27 2" />
        </Icon>
        <div className="ml-[33px] w-[43px] font-['Liberation_Serif',serif] text-[36px] leading-9 text-[#404040] italic">fx</div>
        <div className="h-10 w-0.5 bg-[#d8d8d8]" />
        <div className="ml-[13px] w-[2584px] shrink-0 pt-[3px] text-[23px] tracking-[0.28px] whitespace-nowrap text-[#444]">
          =SUMPRODUCT(IFERROR((1*TRIM(MID($C$8:$AU$8,SEARCH(":",$C$8:$AU$8)+1,10))),0)*(LEFT($C$8:$AU$8,6)=$B$124))
        </div>
        <svg className="ml-[42px] h-[11px] w-[14px] shrink-0" viewBox="0 0 14 11" fill="#595959">
          <path d="M0 0h14L7 11z" />
        </svg>
      </div>
      <div className="h-[6px] border-b-2 border-[#a5a5a5] bg-[#f3f3f3]" />
    </div>
  );
}

/* ---------- sheet data ---------- */

const rowHeaders = [
  { n: 1, h: "h-[92px]" }, { n: 2, h: "h-9" }, { n: 3, h: "h-16" }, { n: 4, h: "h-10" }, { n: 5, h: "h-[46px]" },
  { n: 6, h: "h-7" }, { n: 7, h: "h-7" }, { n: 8, h: "h-7" }, { n: 9, h: "h-8" },
  { n: 10, h: "h-7" }, { n: 11, h: "h-7" }, { n: 12, h: "h-7" }, { n: 13, h: "h-8" },
  { n: 14, h: "h-7" }, { n: 15, h: "h-[26px]" }, { n: 16, h: "h-7" }, { n: 17, h: "h-8" },
  { n: 18, h: "h-7" }, { n: 19, h: "h-7" }, { n: 20, h: "h-[26px]" }, { n: 21, h: "h-[30px]" }, { n: 22, h: "h-8" },
  { n: 23, h: "h-7" }, { n: 24, h: "h-7" }, { n: 25, h: "h-7" }, { n: 26, h: "h-8" },
  { n: 27, h: "h-7" }, { n: 28, h: "h-7" }, { n: 29, h: "h-7" }, { n: 30, h: "h-8" },
  { n: 31, h: "h-7" }, { n: 32, h: "h-7" }, { n: 33, h: "h-7" }, { n: 34, h: "h-8" },
  { n: 35, h: "h-7" }, { n: 36, h: "h-7" }, { n: 37, h: "h-7" }, { n: 38, h: "h-8" },
  { n: 39, h: "h-9" }, { n: 40, h: "h-16" }, { n: 41, h: "h-10" }, { n: "", h: "h-[20px]" },
];

const tournaments = [
  {
    h: "h-[116px]",
    rows: [
      { h: "h-7", left: "APR 11-14", right: "PICKS:", pr: "pr-1" },
      { h: "h-7", left: "The Masters" },
      { h: "h-7", left: "$20,000,000", right: "Scheffler", pr: "pr-[13px]" },
      { h: "h-7", left: "1st Place-$3.6 million", right: "Winnings:", pr: "pr-1.5" },
    ],
  },
  {
    h: "h-[116px]",
    rows: [
      { h: "h-7", left: "APR 18-21", right: "PICKS:", pr: "pr-1" },
      { h: "h-7", left: "RBC Heritage" },
      { h: "h-7", left: "$20,000,000", right: "Scheffler", pr: "pr-[13px]" },
      { h: "h-7", left: "1st place-$3.6 million", right: "Winnings:", pr: "pr-1.5" },
    ],
  },
  {
    h: "h-[114px]",
    rows: [
      { h: "h-7", left: "APR 18-21", right: "PICKS:", pr: "pr-1" },
      { h: "h-[26px]", left: "Corales Puntacana Championship" },
      { h: "h-7", left: "$4,000,000", right: "Horschel", pr: "pr-[14px]" },
      { h: "h-7", left: "1ST place-$720k", right: "Winnings:", pr: "pr-2.5" },
    ],
  },
  {
    h: "h-[144px]",
    rows: [
      { h: "h-7", left: "APR 25-28", right: "PICKS:", pr: "pr-1" },
      { h: "h-[54px]", left: "The Zurich Classic of New Orleans", top: true },
      { h: "h-[30px]", left: "$8,900,000", right: "'23 Hardy/Riley", pr: "pr-1.5" },
      { h: "h-7", left: "1st place-$1.242 mil each", right: "Winnings:", pr: "pr-0.5" },
    ],
  },
  {
    h: "h-[116px]",
    rows: [
      { h: "h-7", left: "MAY 2-5", right: "PICKS:", pr: "pr-0.5" },
      { h: "h-7", left: "CJ Cup Byron Nelson" },
      { h: "h-7", left: "$9,500,000", right: "'23 J. Day", pr: "pr-2" },
      { h: "h-7", left: "1st place-$1.71 million", right: "Winnings:", pr: "pr-1.5" },
    ],
  },
  {
    h: "h-[116px]",
    rows: [
      { h: "h-7", left: "MAY 9-12", right: "PICKS:", pr: "pr-0.5" },
      { h: "h-7", left: "Wells Fargo Championship" },
      { h: "h-7", left: "$20,00,0000", right: "'23 W. Clark", pr: "pr-[10px]" },
      { h: "h-7", left: "1st place-$3.6 million", right: "Winnings:", pr: "pr-1.5" },
    ],
  },
  {
    h: "h-[116px]",
    rows: [
      { h: "h-7", left: "MAY 9-12", right: "PICKS:", pr: "-mr-[3px]" },
      { h: "h-7", left: "Myrtle Beach Classic" },
      { h: "h-7", left: "$4,000,000" },
      { h: "h-7", left: "1st place-$720k", right: "Winnings:", pr: "pr-1.5" },
    ],
  },
  {
    h: "h-[116px]",
    rows: [
      { h: "h-7", left: "MAY 16-19", right: "PICKS:", pr: "pr-2" },
      { h: "h-7", left: "PGA Championship" },
      { h: "h-7", left: "$17,500,000", right: "'23 B. Koepka", pr: "pr-3" },
      { h: "h-7", left: "1st place-$3.15 million", right: "Winnings:", pr: "pr-1.5" },
    ],
  },
];

// [pick, eagles, winnings] for the three finished tournaments
const members = [
  { col: "AL", w: "w-[130px]", inner: "w-[200px] -ml-[74px]", namePad: "pl-7", pos: 36, name: "NJAMR09", total: "$224,950", picks: [["J. Niemann", "", "$175,500"], ["Fleetwood", "", "$43,600"], ["Hojgaard", "", "0"]] },
  { col: "AM", w: "w-[230px]", pos: 37, name: "400block", total: "$219,100", picks: [["J. Niemann", "", "$175,500"], ["Cam Young", "1", "$43,600"], ["Hojgaard", "", "0"]] },
  { col: "AN", w: "w-[214px]", pos: 37, name: "Scottstradamus", total: "$219,100", picks: [["McIlroy", "", "$175,500"], ["Cam Young", "1", "$43,600"], ["Hojgaard", "", "0"]] },
  { col: "AO", w: "w-[212px]", pos: 39, name: "Jobeywan72", total: "$218,100", picks: [["J. Niemann", "", "$175,500"], ["Lowry", "", "$42,600"], ["Hojgaard", "", "0"]] },
  { col: "AP", w: "w-[216px]", pos: 40, name: "Gmoser148", total: "$168,100", picks: [["J. Spieth", "", "0"], ["Fitzpatrick", "", "$136,500"], ["Noren", "1", "$31,600"]] },
  { col: "AQ", w: "w-[204px]", pos: 41, name: "LochJeff", total: "$161,300", picks: [["Homa", "", "0"], ["Lowry", "", "0"], ["Noren", "", "0"]] },
  { col: "AR", w: "w-[204px]", pos: 42, name: "DSFreeman", total: "$107,400", picks: [["Hovland", "", "0"], ["Homa", "", "0"], ["Noren", "", "0"]] },
  { col: "AS", w: "w-[204px]", pos: 43, name: "ArePea", total: "$90,800", picks: [["Hovland", "", "0"], ["Homa", "", "0"], ["Noren", "", "0"]] },
  { col: "AT", w: "w-[204px]", pos: 44, name: "RollTitleist", total: "$43,450", picks: [["J. Niemann", "", "0"], ["Homa", "", "0"], ["Noren", "", "0"]] },
  { col: "AU", w: "w-[204px]", pos: 45, name: "Bobby Love", total: "$46,200", picks: [["Hovland", "", "0"], ["Homa", "1", "$46,200"], ["Hojgaard", "", "0"]] },
];

const totals = [
  { blue: "h-[60px]", gray: "h-7", eagles: 10, sum: "$42,512,500" },
  { blue: "h-[58px]", gray: "h-7", eagles: 34, sum: "$19,957,987" },
  { blue: "h-14", gray: "h-7", eagles: 19, sum: "$3,460,298" },
  { blue: "h-[84px]", gray: "h-[30px]", eagles: 0, sum: "$0" },
  { blue: "h-[58px]", gray: "h-7", eagles: 0, sum: "$0" },
  { blue: "h-[58px]", gray: "h-7", eagles: 0, sum: "$0" },
  { blue: "h-[58px]", gray: "h-7", eagles: 0, sum: "$0" },
  { blue: "h-[58px]", gray: "h-7", eagles: 0, sum: "$0" },
];

/* ---------- sheet ---------- */

function ColHead({ w, children, active }) {
  return (
    <div className={clsx("flex h-10 shrink-0 items-center justify-center overflow-hidden border-r-2 pl-px font-['DejaVu_Sans',sans-serif] text-[17.500px]", w, active ? "border-b-4 border-r-[#e4e4e4] border-b-[#217346] bg-[#f0f0f0] pt-1 text-[#217346]" : "border-b-2 border-r-[#e4e4e4] border-b-[#b4b4b4] bg-linear-to-b from-[#f9f9f9] to-white pt-0.5 text-[#666]")}>
      {children}
    </div>
  );
}

function RowHeaders() {
  return (
    <div className="w-[46px] shrink-0 border-r-2 border-[#b4b4b4] bg-[#fbfbfb]">
      {rowHeaders.map((r, i) => (
        <div
          key={i}
          className={clsx(
            "flex items-end justify-center border-b-2 border-[#dcdcdc] pr-px pb-[3px] font-['DejaVu_Sans',sans-serif] text-[17.500px] leading-[20px]",
            r.h,
            r.n === 8 ? "-mr-0.5 border-r-4 border-r-[#217346] bg-[#f0f0f0] text-[#217346]" : "text-[#666]"
          )}
        >
          {r.n}
        </div>
      ))}
    </div>
  );
}

function Segment({ big, sup, h, top, bigTop, gap }) {
  return (
    <div className={clsx("w-full overflow-hidden bg-[#808080] font-['DejaVu_Sans',sans-serif]", h, top)}>
      <div className="flex h-[74px] pl-[10px]">
        <div className={clsx("text-[54px] leading-[64px]", bigTop)}>{big}</div>
        <div className="mt-[2px] text-[34px] leading-[40px]">{sup}</div>
      </div>
      <div className={clsx("text-center text-[19.300px] leading-6 font-bold", gap)}>SEGMENT</div>
    </div>
  );
}

function ColumnA() {
  return (
    <div className="w-32 shrink-0 border-r-4 border-black font-['DejaVu_Sans',sans-serif] text-black">
      <Segment big="1" sup="st" h="h-[136px]" top="pt-[25px]" bigTop="mt-2" gap="mt-[9px]" />
      <div className="flex h-[50px] items-center justify-center border-y-4 border-black bg-[#bfbfbf] pt-0.5 pl-0.5 text-[34px]">#</div>
      {tournaments.map((t, i) => (
        <div key={i} className={clsx("flex items-center justify-center border-b-4 border-black bg-white pt-px pl-0.5 text-[35px]", t.h)}>
          {i + 1}
        </div>
      ))}
      <Segment big="2" sup="nd" h="h-[160px]" top="pt-[39px]" bigTop="mt-[15px]" gap="mt-[3px]" />
    </div>
  );
}

function ColumnB() {
  const label = "flex items-center justify-end border-b-4 border-black pr-0.5";
  return (
    <div className={clsx("w-[444px] shrink-0 border-r-2 border-black text-black", arial)}>
      <div className={clsx(label, "h-9 bg-[#c4bd97] pt-1")}>Segment 1 Position:</div>
      <div className={clsx(label, "h-16 bg-[#d9d9d9] pt-1")}>Pool Member:</div>
      <div className={clsx(label, "h-10 bg-[#b1a0c7] pt-1")}>Segment 1 Cumulative Winnings:</div>
      <div className="flex h-[46px] items-center border-b-4 border-black bg-[#bfbfbf] pt-1 pl-1 text-[28px] tracking-[0.35px]">Tournaments:</div>
      {tournaments.map((t, i) => (
        <div key={i} className={clsx("border-b-4 border-black bg-white", t.h)}>
          {t.rows.map((r, j) => (
            <div key={j} className={clsx("flex justify-between pl-1 leading-[26px] whitespace-nowrap", r.h, !r.top && "items-center", j < 2 && !r.top ? "pb-px" : j >= 2 && "pt-0.5")}>
              <span>{r.left}</span>
              <span className={r.pr}>{r.right}</span>
            </div>
          ))}
        </div>
      ))}
      <div className={clsx(label, "h-9 bg-[#c4bd97] pt-1")}>Segment 2 Position:</div>
      <div className={clsx(label, "h-16 bg-[#d9d9d9] pt-1")}>Pool Member:</div>
      <div className={clsx(label, "h-10 bg-[#fabf8f] pt-1")}>Segment 2 Cumulative Winnings:</div>
      <div className="flex h-[36px] items-center justify-end bg-[#538dd5] pt-1.5 pr-0.5">Overall Cumulative Winnings:</div>
    </div>
  );
}

function Flag() {
  return (
    <svg className="absolute top-0 right-0 h-2.5 w-2.5" viewBox="0 0 10 10" fill="#f00">
      <path d="M0 0h10v10z" />
    </svg>
  );
}

function Pick({ h = "h-7", gray, border = "", shift = "pb-px", children }) {
  return (
    <div className={clsx("flex items-center overflow-hidden pl-1 leading-[26px] whitespace-nowrap", h, shift, gray ? "bg-[#bfbfbf]" : "bg-white", border)}>
      {children}
    </div>
  );
}

function Money({ value }) {
  const zero = value === "0";
  return (
    <div className={clsx("flex h-8 items-center border-b-4 border-black bg-white pt-[5px]", verdana, zero ? "justify-center pl-[3px] text-[#c00000]" : "pl-1")}>
      {value}
    </div>
  );
}

function MemberColumn({ m }) {
  const head = "relative flex items-center justify-center border-b-4 border-black whitespace-nowrap";
  const namePad = m.namePad || "pl-px";
  return (
    <div className={clsx("shrink-0 overflow-hidden border-r-4 border-black text-black", m.w)}>
      <div className={clsx(arial, m.inner)}>
        <div className={clsx(head, verdana, "h-9 bg-[#c4bd97] pt-[5px] pl-[3px]")}>{m.pos}</div>
        <div className={clsx(head, "h-16 bg-[#d9d9d9]", namePad)}>{m.name}<Flag /></div>
        <div className={clsx(head, verdana, "h-10 bg-[#b1a0c7] pt-1.5 pl-[3px]")}>{m.total}</div>
        <div className="h-[46px] border-b-4 border-black bg-[#595959]" />
        {tournaments.map((t, i) => {
          const [pick, eagles, won] = m.picks[i] || ["", "", ""];
          return (
            <div key={i}>
              <Pick gray border={i === 3 ? "border-b-2 border-black" : ""}>{pick}</Pick>
              {i === 3 && <div className="h-7 border-b-2 border-dotted border-black bg-[#bfbfbf]" />}
              <Pick h={i === 2 || i === 3 ? "h-[26px]" : "h-7"} />
              <Pick h={i === 3 ? "h-[30px]" : "h-7"} gray shift="pt-0.5">Eagles:{eagles && ` ${eagles}`}</Pick>
              <Money value={won} />
            </div>
          );
        })}
        <div className="h-9 border-b-4 border-black bg-[#c4bd97]" />
        <div className={clsx(head, "h-16 bg-[#d9d9d9]", namePad)}>{m.name}<Flag /></div>
        <div className={clsx(head, verdana, "h-10 bg-[#fabf8f] pt-1.5 pl-[3px] text-[#c00000]")}>0</div>
        <div className={clsx("flex h-[38px] items-center justify-center bg-[#538dd5] pt-1 pl-[3px]", verdana)}>{m.total}</div>
      </div>
    </div>
  );
}

function TotalsColumn() {
  const sum = "flex items-center justify-end pr-0.5";
  return (
    <div className={clsx("w-[268px] shrink-0 text-black", verdana)}>
      <div className="flex h-48 flex-col justify-end border-r-6 border-b-4 border-black bg-[#b7dee8] text-center text-[21.800px] leading-7 tracking-[0.1px]">
        <div className="relative top-0.5">
          <div>Total Segment and</div>
          <div>Individual</div>
          <div>Tournament Totals</div>
        </div>
      </div>
      <div className={clsx(sum, "h-10 border-r-6 border-b-4 border-black bg-[#b1a0c7] pt-1.5")}>$65,930,785</div>
      <div className="h-11 border-r-6 border-black bg-[#595959]" />
      {totals.map((t, i) => (
        <div key={i} className="border-r-6 border-b-4 border-black">
          <div className={clsx("border-b-4 border-black bg-[#b7dee8]", t.blue)} />
          <div className={clsx("flex items-center justify-center bg-[#d9d9d9] pt-0.5 pl-0.5", t.gray)}>{t.eagles}</div>
          <div className={clsx(sum, "h-[26px] bg-white pt-[3px]")}>{t.sum}</div>
        </div>
      ))}
      <div className="h-9 w-[266px] border-r-4 border-b-4 border-black bg-[#c4bd97]" />
      <div className="h-16 border-r-6 border-b-4 border-black bg-[#b7dee8]" />
      <div className={clsx(sum, "h-10 border-r-6 border-b-4 border-black bg-[#fabf8f] pt-1.5")}>$0</div>
      <div className={clsx(sum, "h-[38px] border-r-6 border-black bg-[#538dd5] pt-1")}>$65,930,785</div>
    </div>
  );
}

function Sheet() {
  return (
    <div className="flex h-[1458px]">
      <div className="w-[2994px] shrink-0">
        <div className="flex h-10">
          <div className="flex h-10 w-[46px] items-end justify-end border-r-2 border-b-2 border-[#b4b4b4] bg-[#fbfbfb] p-1">
            <svg className="h-[26px] w-[26px]" viewBox="0 0 26 26" fill="#d6d6d6">
              <path d="M26 0v26H0z" />
            </svg>
          </div>
          <ColHead w="w-[128px]">A</ColHead>
          <ColHead w="w-[444px]">B</ColHead>
          <div className="h-10 w-0.5 bg-[#8c8c8c]" />
          {members.map((m) => (
            <ColHead key={m.col} w={m.w}><span className={m.col === "AL" ? "-ml-[74px]" : ""}>{m.col}</span></ColHead>
          ))}
          <ColHead w="w-[266px]" active>AV</ColHead>
          <ColHead w="w-[86px]"><span className="ml-8">AW</span></ColHead>
        </div>

        <div className="flex h-[1390px] overflow-hidden border-b-2 border-[#dcdcdc]">
          <RowHeaders />
          <div className="w-[572px] shrink-0">
            <div className="flex h-[92px] items-center justify-center border-x-2 border-t-2 border-b-4 border-black bg-white pt-0.5 pl-3.5 font-['DejaVu_Sans',sans-serif] text-[40px] font-bold tracking-[0.25px] text-black">
              2024 Jeff's Golf Pool
            </div>
            <div className="flex">
              <ColumnA />
              <ColumnB />
            </div>
          </div>
          <div className="w-0.5 shrink-0 bg-[#8c8c8c]" />
          <div className="w-[2022px] shrink-0">
            <div className="mr-0.5 h-[92px] border-t-2 border-b-4 border-black bg-[#808080]" />
            <div className="flex">
              {members.map((m) => (
                <MemberColumn key={m.col} m={m} />
              ))}
            </div>
          </div>
          <div className="relative shrink-0">
            <div className="absolute top-0 -left-0.5 h-[88px] w-0.5 bg-[#b7dee8]" />
            <TotalsColumn />
            <div className="absolute top-[332px] -left-1 h-[34px] w-[272px] border-4 border-[#217346]">
              <div className="h-full border-2 border-white" />
              <div className="absolute -right-1.5 -bottom-1.5 h-3 w-3 border-t-2 border-l-2 border-white bg-[#217346]" />
            </div>
          </div>
          <div className="flex-1 bg-white">
            <div className="h-48 border-b-2 border-[#d4d4d4]" />
            {rowHeaders.slice(3).map((r, i) => (
              <div key={i} className={clsx("border-b-2 border-[#d4d4d4]", r.h)} />
            ))}
          </div>
        </div>

        <div className="flex h-[28px] items-center bg-[#fafafa] pt-0.5">
          <div className="ml-[2197px] h-[18px] w-[648px] rounded-full bg-[#b9b9b9]" />
        </div>
      </div>
      <div className="w-[30px] border-l-2 border-[#e4e4e4] bg-[#fafafa]">
        <div className="mt-1 ml-[5px] h-[161px] w-[18px] rounded-full bg-[#b9b9b9]" />
      </div>
    </div>
  );
}

/* ---------- bottom bars ---------- */

function SheetTabs() {
  return (
    <div className="flex h-[52px] border-t-2 border-[#cfcfcf] bg-[#efefef]">
      <svg className="mt-4 ml-[30px] h-5 w-[60px]" viewBox="0 0 60 20" fill="#b5b5b5">
        <path d="M14 1v18L0 10zM46 1v18l14-9z" />
      </svg>
      <div className="ml-[30px] flex h-[45px] w-[223px] items-center justify-center rounded-b-md border-x-2 border-b-2 border-[#c4c4c4] bg-white pt-1 text-[24px] font-bold tracking-[-0.4px] text-[#25875a] shadow-sm">
        Tournaments
      </div>
      <svg className="mt-4 ml-[29px] h-5 w-5" viewBox="0 0 20 20" stroke="#595959" strokeWidth="3.500">
        <path d="M10 0v20M0 10h20" />
      </svg>
      <div className="ml-[26px] h-[42px] w-0.5 bg-[#cfcfcf]" />
    </div>
  );
}

function StatusBar() {
  return (
    <div className="flex h-[46px] items-center border-t-2 border-[#adadad] bg-linear-to-b from-[#e4e4e4] to-[#d3d3d3] text-[24px] text-[#666]">
      <div className="ml-12 w-[110px]">Ready</div>
      <Icon className="h-[30px] w-[30px] text-[#6b6b6b]" box="0 0 30 30">
        <circle cx="12" cy="5" r="3.500" />
        <path strokeLinejoin="round" d="M8 7C5 6 3 5 1.500 7s0 3 3 4l4 1.500V17L4 27c-1 3 2 3 3 1l5-9 2 3M16 7c3-1 5-2 6.500 0s0 3-3 4l-4 1.500V16M17 17l11 12M28 17 17 29" />
      </Icon>
      <div className="ml-[7px] w-[2201px] whitespace-nowrap">Accessibility: Investigate</div>
      <div className="-mt-1 flex h-[48px] w-[74px] items-center justify-center bg-[#a6a6a6] text-white">
        <Icon className="h-[26px] w-[26px]" box="0 0 26 26">
          <path strokeWidth="2.200" d="M1 1h24v24H1zM9 1v24M17 1v24M1 9h24M1 17h24" />
        </Icon>
      </div>
      <Icon className="ml-[21px] h-[26px] w-[28px]" box="0 0 28 26">
        <path strokeWidth="2.200" d="M1 1h26v24H1zM6.500 5h15v16h-15zM10 9.500h8M10 13h8M10 16.500h8" />
      </Icon>
      <Icon className="ml-[43px] h-[26px] w-[28px]" box="0 0 28 26">
        <path strokeWidth="2.200" d="M1 1h26v24H1zM1 15h17V1M9.500 1v14" />
      </Icon>
      <div className="ml-[38px] h-1 w-4 bg-[#6b6b6b]" />
      <div className="relative ml-3.5 h-2 w-[200px] rounded-full bg-[#a0a0a0]">
        <div className="absolute -top-3 left-[75px] h-8 w-8 rounded-full bg-white shadow" />
      </div>
      <svg className="ml-3.5 h-4 w-4" viewBox="0 0 16 16" stroke="#6b6b6b" strokeWidth="4">
        <path d="M8 0v16M0 8h16" />
      </svg>
      <div className="ml-[35px] text-[23px] tracking-[0.3px]">90%</div>
    </div>
  );
}

/* ---------- about dialog ---------- */

function ExcelLogo() {
  return (
    <svg className="mt-[90px] h-[206px] w-[206px] overflow-visible drop-shadow-md" viewBox="0 0 206 206">
      <defs>
        <linearGradient id="tile" x1="0" y1="0" x2="1" y2="1">
          <stop offset="0" stopColor="#18884f" />
          <stop offset=".5" stopColor="#117e43" />
          <stop offset="1" stopColor="#0b6631" />
        </linearGradient>
        <clipPath id="page"><rect x="54" y="34" width="116" height="136" rx="6" /></clipPath>
      </defs>
      <rect width="206" height="206" rx="47" fill="#fff" />
      <g clipPath="url(#page)">
        <path d="M54 34h59v35H54z" fill="#21a366" />
        <path d="M113 34h57v35h-57z" fill="#33c481" />
        <path d="M54 69h59v33H54z" fill="#107c41" />
        <path d="M113 69h57v33h-57z" fill="#21a366" />
        <path d="M54 102h116v68H54z" fill="#185c37" />
        <path d="M113 102h57v34h-57z" fill="#107c41" />
        <path d="M54 69h41a6 6 0 0 1 6 6v67a6 6 0 0 1-6 6H54z" fill="#000" fillOpacity=".22" />
      </g>
      <rect x="18" y="63" width="77" height="77" rx="6" fill="url(#tile)" />
      <text x="56.500" y="123" textAnchor="middle" fontSize="58" fontWeight="700" fontFamily="Open Sans" fill="#fff">X</text>
    </svg>
  );
}

function AboutDialog() {
  return (
    <div className="absolute top-[534px] left-[1512px] flex h-[924px] w-[840px] flex-col items-center rounded-[20px] bg-[#eeeeee] text-[#262626] shadow-[0_0_2px_rgba(0,0,0,0.7),0_36px_80px_rgba(0,0,0,0.55)]">
      <div className="flex h-[57px] w-full items-center rounded-t-[20px] border-b-2 border-[#d4d4d4] bg-[#f2f2f2]">
        <div className="ml-4 flex w-[272px] gap-4">
          <div className="h-6 w-6 rounded-full border border-[#e0443e] bg-[#ff5f57]" />
          <div className="h-6 w-6 rounded-full border border-[#c4c4c4] bg-[#d9d9d9]" />
          <div className="h-6 w-6 rounded-full border border-[#c4c4c4] bg-[#d9d9d9]" />
        </div>
        <div className="w-[260px] text-center text-[26px] font-bold tracking-[-0.1px] text-[#4a4a4a]">About Excel</div>
      </div>
      <ExcelLogo />
      <div className="mt-[95px] text-[34px] leading-10 whitespace-nowrap">Microsoft® Excel for Mac</div>
      <div className="mt-[13px] text-center text-[23px] leading-[46px] tracking-[0.5px] whitespace-nowrap">
        <div className="tracking-[0.7px]">Version 16.84 (24041420)</div>
        <div>License: Microsoft 365 Subscription</div>
        <div>Belongs to:</div>
        <div>© 2024 Microsoft. All rights reserved.</div>
      </div>
      <div className="mt-[8px] flex h-10 w-[202px] items-center justify-center rounded-[10px] bg-[#e2e2e2] pt-0.5 text-[25px] tracking-[0.2px]">More Info...</div>
      <div className="mt-[54px] text-center text-[18px] leading-[22px] tracking-[0.32px] whitespace-nowrap text-[#7d7d7d]">
        <div>Warning: This computer program is protected by copyright law and international</div>
        <div>treaties. Unauthorized reproduction or distribution of this program, or any portion</div>
        <div>of it, may result in severe civil and criminal penalties, and will be prosecuted to the</div>
        <div>maximum extent possible under the law.</div>
      </div>
    </div>
  );
}

export default function App() {
  return (
    <div className={clsx("relative h-[1964px] w-[3024px] overflow-hidden bg-linear-to-r from-[#b98a5e] via-[#a07050] to-[#b779c9]", ui)}>
      <MenuBar />
      <div className="mt-0.5 overflow-hidden rounded-[20px] bg-[#f5f5f5]">
        <TitleBar />
        <TabRow />
        <Ribbon />
        <FormulaBar />
        <Sheet />
        <SheetTabs />
        <StatusBar />
      </div>
      <AboutDialog />
    </div>
  );
}
